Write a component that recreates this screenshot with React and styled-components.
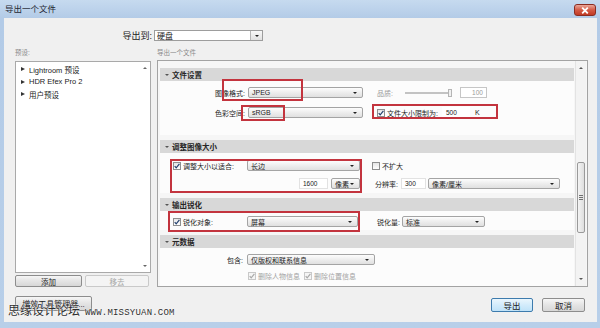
import React from "react";
import styled, { createGlobalStyle, css } from "styled-components";

const GlobalStyle = createGlobalStyle`
  html, body { margin: 0; padding: 0; background: #b9d1ea; }
  body { font-family: "Liberation Sans", "Noto Sans CJK SC", sans-serif; color: #1b1b1b; }
`;

const Window = styled.div`
  position: relative;
  width: 600px;
  height: 328px;
  display: flex;
  flex-direction: column;
  background: linear-gradient(#c6daef, #b3cbe7 18px, #b8cfe9);
  overflow: hidden;
`;

const TitleBar = styled.div`
  height: 18px;
  flex: none;
  display: flex;
  align-items: flex-start;
  padding: 0 4px 0 5px;
`;

const TitleText = styled.span`
  font-size: 8.5px;
  line-height: 9px;
  margin-top: 5px;
  color: #1e2733;
`;

const CloseButton = styled.div`
  margin-left: auto;
  margin-top: 4px;
  width: 22px;
  height: 12px;
  box-sizing: border-box;
  border: 1px solid #8a2d22;
  border-radius: 3px;
  background: linear-gradient(#eaa89b, #d45a45 50%, #c13a24);
  display: flex;
  align-items: center;
  justify-content: center;
`;

const Body = styled.div`
  flex: 1;
  margin: 0 3px 6px 4px;
  background: #f0f0f0;
  display: flex;
  flex-direction: column;
  padding: 12px 9px 0 11px;
`;

const ExportRow = styled.div`
  display: flex;
  align-items: center;
  height: 11px;
  gap: 2px;
`;

const ExportLabel = styled.span`
  width: 137px;
  text-align: right;
  font-size: 9px;
  color: #222;
`;

const ComboBox = styled.div`
  width: 109px;
  height: 11px;
  box-sizing: border-box;
  border: 1px solid #9d9d9d;
  background: #fff;
  display: flex;
  align-items: center;
  font-size: 8px;
`;

const ComboText = styled.span`
  flex: 1;
  padding-left: 2px;
`;

const ComboButton = styled.span`
  width: 12px;
  height: 100%;
  box-sizing: border-box;
  border-left: 1px solid #b5b5b5;
  background: linear-gradient(#f8f8f8, #e1e1e1);
  display: flex;
  align-items: center;
  justify-content: center;
`;

const Columns = styled.div`
  display: flex;
  gap: 6px;
  margin-top: 5px;
`;

const LeftColumn = styled.div`
  width: 136px;
  display: flex;
  flex-direction: column;
`;

const RightColumn = styled.div`
  flex: 1;
  display: flex;
  flex-direction: column;
`;

const ColumnLabel = styled.div`
  height: 14px;
  line-height: 14px;
  font-size: 6.5px;
  color: #8a8a8a;
  padding-left: ${p => p.$pl || 0}px;
`;

const PresetList = styled.div`
  height: 212px;
  margin-top: 1px;
  box-sizing: border-box;
  border: 1px solid #a9a9a9;
  background: #fff;
  display: flex;
`;

const PresetItems = styled.div`
  flex: 1;
  padding: 1px 0 0 5px;
  display: flex;
  flex-direction: column;
`;

const PresetItem = styled.div`
  height: 12.5px;
  display: flex;
  align-items: center;
  gap: 4px;
  font-size: 7.5px;
  color: #222;
`;

const RightTri = styled.span`
  width: 0;
  height: 0;
  border-top: 2.5px solid transparent;
  border-bottom: 2.5px solid transparent;
  border-left: 4px solid #333;
`;

const DownTri = styled.span`
  width: 0;
  height: 0;
  border-left: ${p => p.$s || 3}px solid transparent;
  border-right: ${p => p.$s || 3}px solid transparent;
  border-top: ${p => p.$s || 3}px solid ${p => p.$c || "#222"};
`;

const UpTri = styled.span`
  width: 0;
  height: 0;
  border-left: ${p => p.$s || 2}px solid transparent;
  border-right: ${p => p.$s || 2}px solid transparent;
  border-bottom: ${p => p.$s || 2}px solid ${p => p.$c || "#666"};
`;

const ListScroll = styled.div`
  width: 10px;
  display: flex;
  flex-direction: column;
  justify-content: space-between;
  align-items: center;
  padding: 5px 0 5px;
`;

const ButtonRow = styled.div`
  display: flex;
  gap: 3px;
  margin-top: 2px;
  height: 12px;
`;

const Button = styled.div`
  width: ${p => p.$w}px;
  height: ${p => p.$h || 12}px;
  box-sizing: border-box;
  border: 1px solid #8d8d8d;
  border-radius: 2px;
  background: linear-gradient(#f6f6f6, #e4e4e4 50%, #d7d7d7);
  display: flex;
  align-items: center;
  justify-content: center;
  font-size: ${p => p.$fs || 7.5}px;
  color: #1b1b1b;
  align-self: ${p => p.$self || "auto"};
  ${p => p.$disabled && css`
    border-color: #c9c9c9;
    background: #f4f4f4;
    color: #a6a6a6;
  `}
  ${p => p.$primary && css`
    border-color: #3d7bad;
    background: linear-gradient(#eaf6fd, #d3ecfb 50%, #bfe2f8);
  `}
`;

const Panel = styled.div`
  height: 227px;
  box-sizing: border-box;
  border: 1px solid #a3a3a3;
  background: #f6f6f6;
  display: flex;
  padding: 0 1px 0 2px;
  gap: 1px;
`;

const PanelContent = styled.div`
  flex: 1;
  padding-top: 7px;
  display: flex;
  flex-direction: column;
  gap: 5px;
  overflow: hidden;
`;

const Section = styled.div`
  display: flex;
  flex-direction: column;
`;

const SectionHeader = styled.div`
  height: 13px;
  background: #d8d8d8;
  display: flex;
  align-items: center;
  padding-left: 5px;
  gap: 3px;
  font-size: 7.5px;
  font-weight: bold;
  color: #262626;
`;

const SectionBody = styled.div`
  background: #fcfcfc;
  height: ${p => p.$h}px;
  box-sizing: border-box;
  padding-top: ${p => p.$pt || 0}px;
  display: flex;
  flex-direction: column;
`;

const Row = styled.div`
  display: grid;
  grid-template-columns: 74px 125px 1fr;
  align-items: center;
  height: ${p => p.$h || 11}px;
  margin-top: ${p => p.$mt || 0}px;
  padding-left: 13px;
  font-size: 7px;
`;

const Cell = styled.div`
  display: flex;
  align-items: center;
  min-width: 0;
  white-space: nowrap;
  justify-content: ${p => (p.$end ? "flex-end" : "flex-start")};
  padding-left: ${p => p.$pl || 0}px;
  padding-right: ${p => p.$pr || 0}px;
  ${p => p.$span && css`grid-column: span ${p.$span};`}
  ${p => p.$w && css`width: ${p.$w}px;`}
`;

const Text = styled.span`
  margin-left: ${p => p.$ml || 0}px;
  color: ${p => p.$c || "#1e1e1e"};
`;

const Select = styled.div`
  width: ${p => p.$w}px;
  height: 11px;
  flex: none;
  margin-left: ${p => p.$ml || 0}px;
  box-sizing: border-box;
  border: 1px solid #a4a4a4;
  border-radius: 2px;
  background: linear-gradient(#fdfdfd, #ececec 55%, #e0e0e0);
  display: flex;
  align-items: center;
  padding: 0 5px 0 3px;
  font-size: 7px;
  color: #1e1e1e;
`;

const SelectText = styled.span`
  flex: 1;
`;

const Input = styled.div`
  width: ${p => p.$w}px;
  height: 11px;
  flex: none;
  margin-left: ${p => p.$ml || 0}px;
  box-sizing: border-box;
  border: 1px solid ${p => p.$border || "#e2e2e2"};
  background: #fff;
  display: flex;
  align-items: center;
  justify-content: ${p => (p.$right ? "flex-end" : "flex-start")};
  padding: 0 3px;
  font-size: 6.5px;
  color: ${p => p.$c || "#222"};
`;

const CheckBox = styled.span`
  width: 8px;
  height: 8px;
  flex: none;
  box-sizing: border-box;
  margin-left: ${p => p.$ml || 0}px;
  margin-right: 2px;
  border: 1px solid #8e8f8f;
  background: linear-gradient(#e6e6e6, #ffffff);
  display: inline-flex;
  align-items: center;
  justify-content: center;
  color: #23406e;
  ${p => p.$disabled && css`
    border-color: #c9c9c9;
    color: #a9a9a9;
    background: #f5f5f5;
  `}
`;

const Slider = styled.div`
  width: 47px;
  height: 9px;
  margin-left: ${p => p.$ml || 0}px;
  display: flex;
  align-items: center;
`;

const SliderTrack = styled.div`
  flex: 1;
  height: 2px;
  box-sizing: border-box;
  border: 1px solid #c3c3c3;
  background: #ececec;
`;

const SliderThumb = styled.div`
  width: 4px;
  height: 8px;
  box-sizing: border-box;
  border: 1px solid #b5b5b5;
  background: #f1f1f1;
`;

const ScrollBar = styled.div`
  width: 10px;
  background: #f3f3f3;
  border-left: 1px solid #e3e3e3;
  display: flex;
  flex-direction: column;
  align-items: center;
`;

const ScrollArrow = styled.div`
  height: 14px;
  width: 100%;
  display: flex;
  align-items: center;
  justify-content: center;
  margin-top: ${p => (p.$bottom ? "auto" : "0")};
`;

const ScrollThumb = styled.div`
  width: 8px;
  height: 71px;
  margin-top: 87px;
  box-sizing: border-box;
  border: 1px solid #9a9a9a;
  border-radius: 2px;
  background: linear-gradient(90deg, #f4f4f4, #dedede);
  display: flex;
  flex-direction: column;
  align-items: center;
  justify-content: center;
  gap: 1px;
`;

const Grip = styled.span`
  width: 4px;
  height: 1px;
  background: #6f6f6f;
`;

const Footer = styled.div`
  display: flex;
  margin-top: 9px;
  height: 16px;
  padding-right: 3px;
  gap: 9px;
`;

const FooterSpacer = styled.div`
  flex: 1;
`;

const Highlight = styled.div`
  position: absolute;
  box-sizing: border-box;
  border: 2px solid #c3343e;
  pointer-events: none;
`;

const Watermark = styled.div`
  position: absolute;
  left: 8px;
  top: 303px;
  display: flex;
  align-items: baseline;
  gap: 5px;
  color: #2e2e2e;
  text-shadow: 0 0 2px #fff, 0 0 1px #fff;
  white-space: nowrap;
`;

const WatermarkCn = styled.span`
  font-family: "Noto Sans CJK SC", sans-serif;
  font-size: 12px;
  line-height: 14px;
`;

const WatermarkEn = styled.span`
  font-family: "Liberation Mono", monospace;
  font-size: 9px;
  letter-spacing: 0.2px;
`;

const CheckMark = () => (
  <svg width="6" height="6" viewBox="0 0 6 6">
    <path d="M0.7 3.1 L2.2 4.8 L5.4 0.9" fill="none" stroke="currentColor" strokeWidth="1.2" />
  </svg>
);

const CloseX = () => (
  <svg width="8" height="7" viewBox="0 0 8 7">
    <path d="M1.2 0.6 L6.8 6.4 M6.8 0.6 L1.2 6.4" stroke="#fff" strokeWidth="1.8" />
  </svg>
);

const Dropdown = ({ w, ml, children }) => (
  <Select $w={w} $ml={ml}>
    <SelectText>{children}</SelectText>
    <DownTri $s={2.5} />
  </Select>
);

const highlights = [
  { left: 222, top: 79, width: 81, height: 22 },
  { left: 241, top: 105, width: 44, height: 16 },
  { left: 372, top: 104, width: 126, height: 15 },
  { left: 170, top: 159, width: 192, height: 34 },
  { left: 168, top: 211, width: 192, height: 21 },
];

export default function App() {
  return (
    <>
      <GlobalStyle />
      <Window>
        <TitleBar>
          <TitleText>导出一个文件</TitleText>
          <CloseButton><CloseX /></CloseButton>
        </TitleBar>
        <Body>
          <ExportRow>
            <ExportLabel>导出到:</ExportLabel>
            <ComboBox>
              <ComboText>硬盘</ComboText>
              <ComboButton><DownTri $s={2.5} /></ComboButton>
            </ComboBox>
          </ExportRow>

          <Columns>
            <LeftColumn>
              <ColumnLabel>预设:</ColumnLabel>
              <PresetList>
                <PresetItems>
                  {["Lightroom 预设", "HDR Efex Pro 2", "用户预设"].map(t => (
                    <PresetItem key={t}><RightTri />{t}</PresetItem>
                  ))}
                </PresetItems>
                <ListScroll>
                  <UpTri />
                  <DownTri $s={2} $c="#666" />
                </ListScroll>
              </PresetList>
              <ButtonRow>
                <Button $w={67}>添加</Button>
                <Button $w={64} $disabled>移去</Button>
              </ButtonRow>
            </LeftColumn>

            <RightColumn>
              <ColumnLabel>导出一个文件</ColumnLabel>
              <Panel>
                <PanelContent>
                  <Section>
                    <SectionHeader><DownTri $s={2.5} $c="#555" />文件设置</SectionHeader>
                    <SectionBody $h={54} $pt={6}>
                      <Row>
                        <Cell $end $pr={2}>图像格式:</Cell>
                        <Cell $pl={1}><Dropdown w={115}>JPEG</Dropdown></Cell>
                        <Cell $pl={5}>
                          <Text $c="#9b9b9b">品质:</Text>
                          <Slider $ml={12}><SliderTrack /><SliderThumb /></Slider>
                          <Input $w={27} $ml={8} $right $border="#c6c6c6" $c="#9a9a9a">100</Input>
                        </Cell>
                      </Row>
                      <Row $mt={9}>
                        <Cell $end $pr={2}>色彩空间:</Cell>
                        <Cell $pl={1}><Dropdown w={115}>sRGB</Dropdown></Cell>
                        <Cell $pl={5}>
                          <CheckBox><CheckMark /></CheckBox>
                          <Text>文件大小限制为:</Text>
                          <Input $w={28} $ml={4} $border="#fff">500</Input>
                          <Text $ml={5}>K</Text>
                        </Cell>
                      </Row>
                    </SectionBody>
                  </Section>

                  <Section>
                    <SectionHeader><DownTri $s={2.5} $c="#555" />调整图像大小</SectionHeader>
                    <SectionBody $h={40} $pt={7}>
                      <Row>
                        <Cell><CheckBox><CheckMark /></CheckBox>调整大小以适合:</Cell>
                        <Cell><Dropdown w={113}>长边</Dropdown></Cell>
                        <Cell><CheckBox /><Text>不扩大</Text></Cell>
                      </Row>
                      <Row $mt={7}>
                        <Cell />
                        <Cell $end $w={113}>
                          <Input $w={29}>1600</Input>
                          <Dropdown w={29} ml={3}>像素</Dropdown>
                        </Cell>
                        <Cell $pl={3}>
                          <Text>分辨率:</Text>
                          <Input $w={25} $ml={3}>300</Input>
                          <Dropdown w={132} ml={2}>像素/厘米</Dropdown>
                        </Cell>
                      </Row>
                    </SectionBody>
                  </Section>

                  <Section>
                    <SectionHeader><DownTri $s={2.5} $c="#555" />输出锐化</SectionHeader>
                    <SectionBody $h={19} $pt={5}>
                      <Row>
                        <Cell><CheckBox><CheckMark /></CheckBox>锐化对象:</Cell>
                        <Cell><Dropdown w={111}>屏幕</Dropdown></Cell>
                        <Cell $pl={5}>
                          <Text>锐化量:</Text>
                          <Dropdown w={83} ml={2}>标准</Dropdown>
                        </Cell>
                      </Row>
                    </SectionBody>
                  </Section>

                  <Section>
                    <SectionHeader><DownTri $s={2.5} $c="#555" />元数据</SectionHeader>
                    <SectionBody $h={40} $pt={6}>
                      <Row>
                        <Cell $end $pr={4}>包含:</Cell>
                        <Cell $span={2}><Dropdown w={128}>仅版权和联系信息</Dropdown></Cell>
                      </Row>
                      <Row $mt={6} $h={9}>
                        <Cell />
                        <Cell $span={2} $pl={1}>
                          <CheckBox $disabled><CheckMark /></CheckBox>
                          <Text $c="#a3a3a3">删除人物信息</Text>
                          <CheckBox $disabled $ml={4}><CheckMark /></CheckBox>
                          <Text $c="#a3a3a3">删除位置信息</Text>
                        </Cell>
                      </Row>
                    </SectionBody>
                  </Section>
                </PanelContent>
                <ScrollBar>
                  <ScrollArrow><UpTri $c="#555" /></ScrollArrow>
                  <ScrollThumb><Grip /><Grip /><Grip /></ScrollThumb>
                  <ScrollArrow $bottom><DownTri $s={2} $c="#555" /></ScrollArrow>
                </ScrollBar>
              </Panel>
            </RightColumn>
          </Columns>

          <Footer>
            <Button $w={77} $h={15} $fs={8} $self="flex-start">增效工具管理器...</Button>
            <FooterSpacer />
            <Button $w={42} $h={14} $fs={8.5} $self="flex-end" $primary>导出</Button>
            <Button $w={43} $h={14} $fs={8.5} $self="flex-end">取消</Button>
          </Footer>
        </Body>

        {highlights.map((h, i) => (
          <Highlight key={i} style={h} />
        ))}

        <Watermark>
          <WatermarkCn>思缘设计论坛</WatermarkCn>
          <WatermarkEn>WWW.MISSYUAN.COM</WatermarkEn>
        </Watermark>
      </Window>
    </>
  );
}
